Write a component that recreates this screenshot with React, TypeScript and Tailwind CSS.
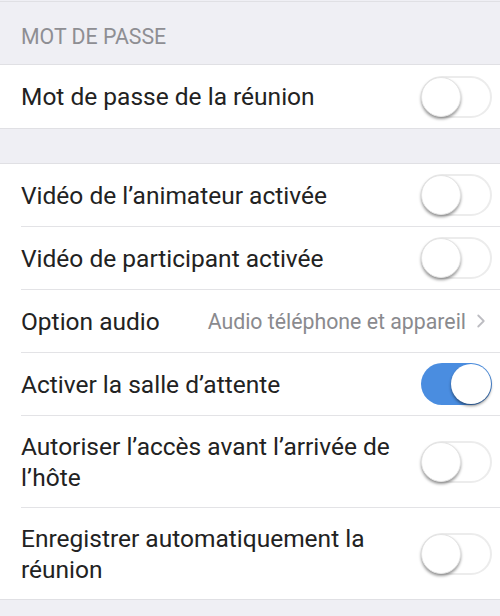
import { ChevronRight } from "lucide-react";

type Row =
  | { kind: "toggle"; label: string; on?: boolean }
  | { kind: "value"; label: string; value: string };

function Toggle({ on = false }: { on?: boolean }) {
  return (
    <div
      className={
        on
          ? "relative h-[42px] w-[71px] shrink-0 rounded-full bg-[#4a8de0]"
          : "relative h-[42px] w-[71px] shrink-0 rounded-full border-2 border-[#ececec] bg-white"
      }
    >
      <div
        className={
          on
            ? "absolute right-[1px] top-[1px] h-[40px] w-[40px] rounded-full bg-white shadow-[0_2px_3px_rgba(0,0,0,0.45)]"
            : "absolute -left-[2px] -top-[1px] h-[40px] w-[40px] rounded-full border border-[#e4e4e4] bg-white shadow-[0_2px_3px_rgba(0,0,0,0.4)]"
        }
      />
    </div>
  );
}

function SettingRow({ row, last }: { row: Row; last?: boolean }) {
  return (
    <div className="pl-[21px]">
      <div
        className={
          "flex min-h-[63px] items-center gap-3 pr-[8px] " +
          (last ? "" : "border-b border-[#e3e3e6]")
        }
      >
        <span className="flex-1 py-[14.5px] text-[24.5px] leading-[31px] text-[#222]">
          {row.label}
        </span>
        {row.kind === "toggle" ? (
          <Toggle on={row.on} />
        ) : (
          <span className="flex items-center gap-1 text-[21.3px] leading-[31px] text-[#8a8a8e]">
            {row.value}
            <ChevronRight className="h-[22px] w-[22px] text-[#bdbdc2]" strokeWidth={2} />
          </span>
        )}
      </div>
    </div>
  );
}

const rows: Row[] = [
  { kind: "toggle", label: "Vidéo de l’animateur activée" },
  { kind: "toggle", label: "Vidéo de participant activée" },
  { kind: "value", label: "Option audio", value: "Audio téléphone et appareil" },
  { kind: "toggle", label: "Activer la salle d’attente", on: true },
  { kind: "toggle", label: "Autoriser l’accès avant l’arrivée de l’hôte" },
  { kind: "toggle", label: "Enregistrer automatiquement la réunion" },
];

export default function App() {
  return (
    <div className="h-[616px] w-[500px] overflow-hidden bg-[#efeff4] font-['Roboto',sans-serif]">
      <div className="mt-[1px] border-t border-[#e0e0e4]" />
      <div className="flex h-[62px] items-center px-[21px] pt-[8px] text-[21.3px] text-[#8e8e93]">
        MOT DE PASSE
      </div>
      <div className="border-y border-[#e0e0e4] bg-white">
        <SettingRow row={{ kind: "toggle", label: "Mot de passe de la réunion" }} last />
      </div>
      <div className="h-[34px]" />
      <div className="border-y border-[#e0e0e4] bg-white">
        {rows.map((r, i) => (
          <SettingRow key={r.label} row={r} last={i === rows.length - 1} />
        ))}
      </div>
    </div>
  );
}
